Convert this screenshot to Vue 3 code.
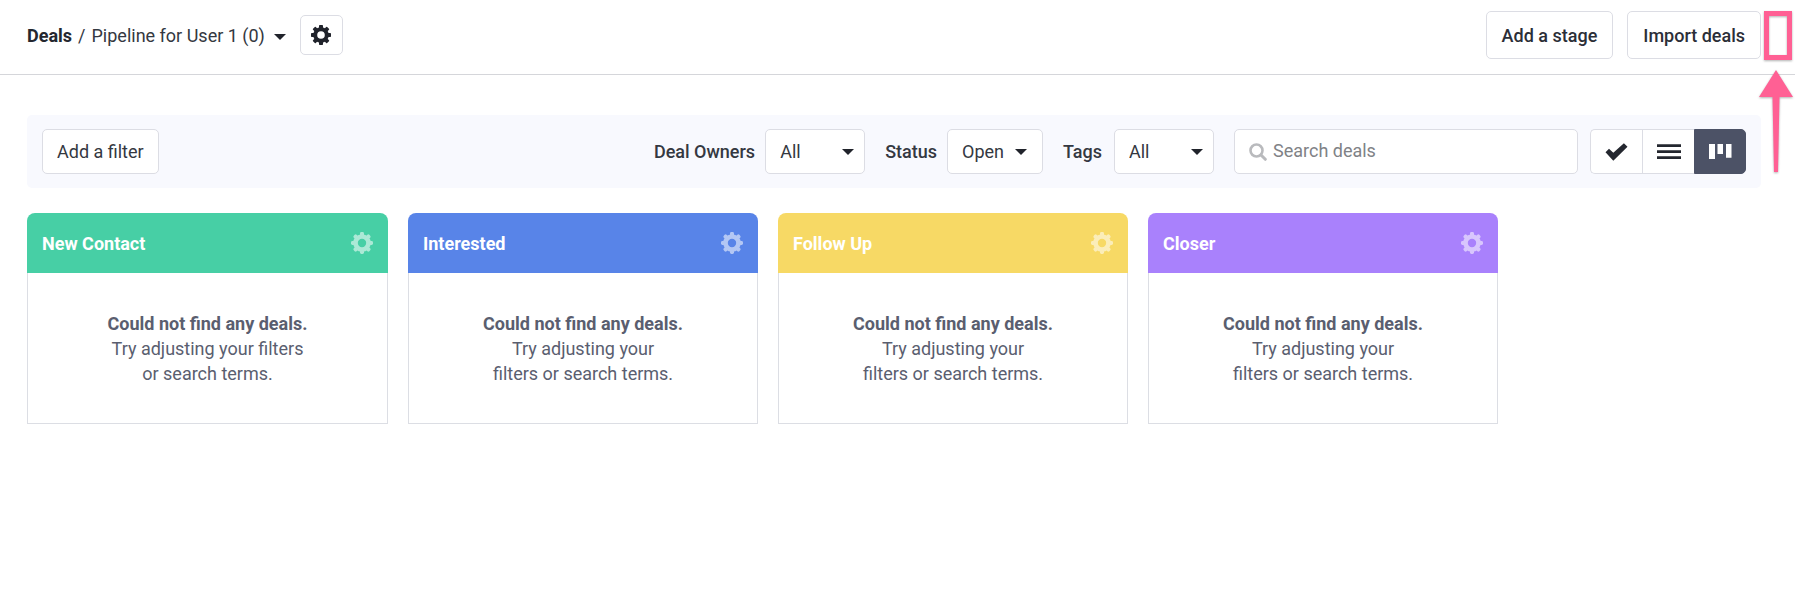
<script setup>
import { ref } from 'vue'

const search = ref('')
const view = ref('board')
const teeth = [0, 45, 90, 135, 180, 225, 270, 315]

const stages = [
  { name: 'New Contact', tone: 'green', hint: 'Try adjusting your filters\nor search terms.' },
  { name: 'Interested', tone: 'blue', hint: 'Try adjusting your\nfilters or search terms.' },
  { name: 'Follow Up', tone: 'yellow', hint: 'Try adjusting your\nfilters or search terms.' },
  { name: 'Closer', tone: 'purple', hint: 'Try adjusting your\nfilters or search terms.' },
]
</script>

<template>
  <div class="page">
    <header class="topbar">
      <nav class="crumbs" aria-label="Breadcrumb">
        <a href="#" class="crumb-root">Deals</a>
        <span class="slash">/</span>
        <span class="picker picker-plain">
          <select aria-label="Pipeline">
            <option>Pipeline for User 1 (0)</option>
          </select>
          <svg class="caret" viewBox="0 0 12 6" aria-hidden="true"><path d="M0 0H12L6 6Z" /></svg>
        </span>
        <button type="button" class="btn btn-gear" aria-label="Pipeline settings">
          <svg class="gear-small" viewBox="-10 -10 20 20" aria-hidden="true">
            <circle r="5.8" fill="none" stroke="currentColor" stroke-width="4" />
            <rect v-for="a in teeth" :key="a" x="-2" y="-10" width="4" height="4.5" rx="0.7" :transform="`rotate(${a})`" />
          </svg>
        </button>
      </nav>
      <div class="actions">
        <button type="button" class="btn btn-strong">Add a stage</button>
        <button type="button" class="btn btn-strong">Import deals</button>
      </div>
    </header>

    <div class="marker" aria-hidden="true">
      <div class="marker-box"></div>
      <svg class="marker-arrow" viewBox="0 0 34 103">
        <path d="M17 0L34 27H20.5L19 102H15L13.500 27H0Z" />
      </svg>
    </div>

    <main class="content">
      <section class="filters" aria-label="Filters">
        <button type="button" class="btn btn-filter">Add a filter</button>

        <div class="fields">
          <label class="label label-owners" for="owners">Deal Owners</label>
          <span class="picker picker-wide">
            <select id="owners"><option>All</option></select>
            <svg class="caret" viewBox="0 0 12 6" aria-hidden="true"><path d="M0 0H12L6 6Z" /></svg>
          </span>

          <label class="label label-status" for="status">Status</label>
          <span class="picker picker-status">
            <select id="status"><option>Open</option></select>
            <svg class="caret" viewBox="0 0 12 6" aria-hidden="true"><path d="M0 0H12L6 6Z" /></svg>
          </span>

          <label class="label label-tags" for="tags">Tags</label>
          <span class="picker picker-wide">
            <select id="tags"><option>All</option></select>
            <svg class="caret" viewBox="0 0 12 6" aria-hidden="true"><path d="M0 0H12L6 6Z" /></svg>
          </span>
        </div>

        <div class="search">
          <svg class="search-icon" viewBox="0 0 18 18" aria-hidden="true">
            <circle cx="7.500" cy="7.500" r="6" fill="none" stroke="currentColor" stroke-width="2.600" />
            <path d="M12 12L16.300 16.300" stroke="currentColor" stroke-width="3" stroke-linecap="round" />
          </svg>
          <input v-model="search" type="text" placeholder="Search deals" aria-label="Search deals" />
        </div>

        <div class="views" role="group" aria-label="View">
          <button type="button" :class="{ active: view === 'tasks' }" aria-label="Tasks view" @click="view = 'tasks'">
            <svg width="23" height="18" viewBox="0 0 23 18" aria-hidden="true">
              <path d="M0.500 9.200L4 5.700L8.300 9.700L18.900 0.200L22.500 3.700L8.300 17.700Z" />
            </svg>
          </button>
          <button type="button" :class="{ active: view === 'list' }" aria-label="List view" @click="view = 'list'">
            <svg width="24" height="16" viewBox="0 0 24 16" aria-hidden="true">
              <path d="M0 0.300H24V3.100H0ZM0 6.300H24V9.100H0ZM0 12.300H24V15.100H0Z" />
            </svg>
          </button>
          <button type="button" :class="{ active: view === 'board' }" aria-label="Board view" @click="view = 'board'">
            <svg width="23" height="15" viewBox="0 0 23 15" aria-hidden="true">
              <path d="M0 0H6V15H0ZM8.500 0H14V10H8.500ZM17 0H22.500V13.700H17Z" />
            </svg>
          </button>
        </div>
      </section>

      <section class="board" aria-label="Stages">
        <article v-for="s in stages" :key="s.name" class="stage">
          <header class="stage-head" :class="s.tone">
            <h2>{{ s.name }}</h2>
            <button type="button" class="stage-gear" :aria-label="`${s.name} settings`">
              <svg viewBox="-11 -11 22 22" aria-hidden="true">
                <circle r="6.500" fill="none" stroke="currentColor" stroke-width="4.600" />
                <rect v-for="a in teeth" :key="a" x="-2" y="-11" width="4" height="5" rx="1.400" :transform="`rotate(${a})`" />
              </svg>
            </button>
          </header>
          <div class="stage-body">
            <strong>Could not find any deals.</strong>
            <p>{{ s.hint }}</p>
          </div>
        </article>
      </section>
    </main>
  </div>
</template>

<style>
body {
  margin: 0;
  background: #fff;
}
</style>

<style scoped>
.page {
  position: relative;
  font-family: Roboto, "Liberation Sans", sans-serif;
  font-size: 18px;
  line-height: 25px;
  color: #343841;
}

.page * {
  box-sizing: border-box;
}

button,
input,
select {
  font: inherit;
  color: inherit;
  margin: 0;
}

button,
select {
  cursor: pointer;
}

svg {
  display: block;
  fill: currentColor;
}

.topbar {
  display: flex;
  justify-content: space-between;
  align-items: flex-start;
  margin-right: 2px;
  padding: 11px 34px 15px 27px;
  border-bottom: 1px solid #d5d6da;
}

.crumbs {
  display: flex;
  align-items: center;
  padding-top: 4px;
}

.crumb-root {
  color: #24272f;
  font-weight: 700;
  text-decoration: none;
}

.slash {
  padding: 0 6px;
}

.btn {
  height: 45px;
  padding: 0 14px;
  border: 1px solid #dcdde4;
  border-radius: 5px;
  background: #fff;
  white-space: nowrap;
}

.btn-gear {
  display: flex;
  align-items: center;
  justify-content: center;
  width: 43px;
  height: 40px;
  margin-left: 14px;
  padding: 0;
  color: #20232b;
}

.gear-small {
  width: 20px;
  height: 20px;
}

.actions {
  display: flex;
  gap: 14px;
}

.btn-strong {
  height: 48px;
  padding: 0 15px;
  font-weight: 500;
  color: #2b2e37;
}

.marker {
  position: absolute;
  top: 11px;
  right: 4px;
  display: flex;
  flex-direction: column;
  align-items: flex-end;
  gap: 10px;
  color: #ff6094;
  filter: drop-shadow(0 1px 1px rgba(60, 60, 60, 0.4));
}

.marker-box {
  width: 28px;
  height: 49px;
  margin-right: 1px;
  border: 5px solid currentColor;
}

.marker-arrow {
  width: 34px;
  height: 103px;
}

.content {
  padding: 40px 36px 0 27px;
}

.filters {
  display: flex;
  align-items: center;
  padding: 14px 15px;
  border-radius: 5px;
  background: #f8f9fe;
}

.fields {
  display: flex;
  align-items: center;
  margin-left: auto;
}

.label {
  font-weight: 500;
}

.label-owners {
  margin-right: 10px;
}

.label-status {
  margin: 0 10px 0 20px;
}

.label-tags {
  margin: 0 12px 0 20px;
}

.picker {
  position: relative;
  display: block;
}

.picker select {
  display: block;
  width: 100%;
  height: 45px;
  padding: 0 36px 0 14px;
  border: 1px solid #dcdde4;
  border-radius: 5px;
  background: #fff;
  appearance: none;
}

.caret {
  position: absolute;
  top: 20px;
  right: 11px;
  width: 12px;
  height: 6px;
  color: #20232b;
  pointer-events: none;
}

.picker-plain select {
  height: 25px;
  padding: 0 20px 0 0;
  border: 0;
}

.picker-plain .caret {
  top: 11px;
  right: 0;
}

.picker-wide {
  width: 100px;
}

.picker-status {
  width: 96px;
}

.picker-status .caret {
  right: 16px;
}

.search {
  position: relative;
  flex: 0 1 344px;
  margin-left: 20px;
}

.search-icon {
  position: absolute;
  top: 14px;
  left: 15px;
  width: 18px;
  height: 18px;
  color: #b9babd;
}

.search input {
  display: block;
  width: 100%;
  height: 45px;
  padding: 0 14px 2px 38px;
  border: 1px solid #dcdde4;
  border-radius: 5px;
  background: #fff;
}

.search input::placeholder {
  color: #808286;
  opacity: 1;
}

.views {
  display: flex;
  margin-left: 12px;
}

.views button {
  display: flex;
  align-items: center;
  justify-content: center;
  width: 52px;
  height: 45px;
  padding: 0;
  border: 1px solid #dcdde4;
  border-right-width: 0;
  background: #fff;
  color: #24272f;
}

.views button:first-child {
  border-radius: 5px 0 0 5px;
}

.views button:last-child {
  border-right-width: 1px;
  border-radius: 0 5px 5px 0;
}

.views button.active {
  border-color: #4c5266;
  background: #4c5266;
  color: #fff;
}

.board {
  display: grid;
  grid-template-columns: 361fr 350fr 350fr 350fr 243fr;
  align-items: start;
  gap: 20px;
  margin-top: 25px;
}

.stage-head {
  display: flex;
  align-items: center;
  justify-content: space-between;
  height: 60px;
  padding: 0 15px;
  border-radius: 8px 8px 0 0;
  color: #fff;
}

.stage-head h2 {
  margin: 0;
  font-size: 18px;
  font-weight: 700;
}

.green {
  background: #47cfa5;
}

.blue {
  background: #5884e8;
}

.yellow {
  background: #f7d965;
}

.purple {
  background: #a981fc;
}

.stage-gear {
  padding: 0;
  border: 0;
  background: none;
}

.stage-gear svg {
  width: 22px;
  height: 22px;
  opacity: 0.55;
}

.stage-body {
  padding: 38px 14px 37px;
  border: 1px solid #dcdee4;
  border-top: 0;
  text-align: center;
  color: #5a5e6f;
}

.stage-body strong {
  display: block;
  font-weight: 700;
  white-space: nowrap;
}

.stage-body p {
  margin: 0;
  white-space: pre-line;
}
</style>
